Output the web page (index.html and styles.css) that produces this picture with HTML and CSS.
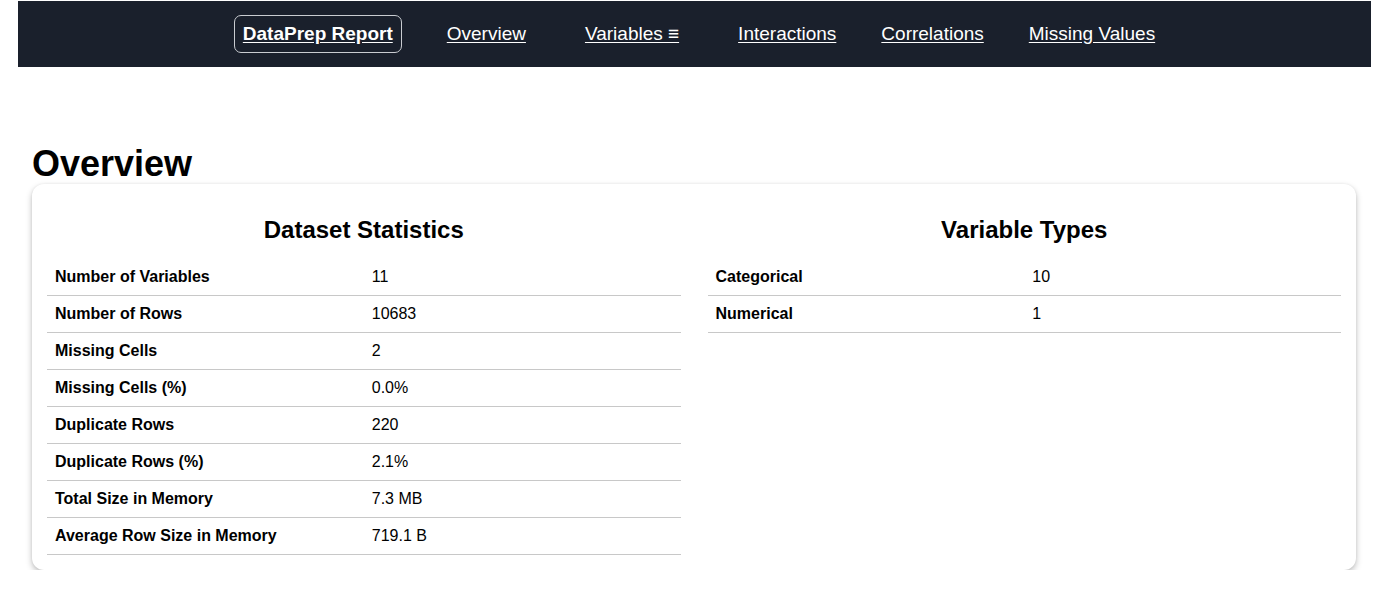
FILE: index.html
```html
<!DOCTYPE html>
<html>
<head>
<meta charset="utf-8">
<title>DataPrep Report</title>
<link rel="stylesheet" href="styles.css">
</head>
<body>
<nav class="topnav">
  <a class="brand" href="#">DataPrep Report</a>
  <a class="nav-link" href="#">Overview</a>
  <a class="nav-link nav-drop" href="#">Variables ≡</a>
  <a class="nav-link" href="#">Interactions</a>
  <a class="nav-link" href="#">Correlations</a>
  <a class="nav-link" href="#">Missing Values</a>
</nav>
<main class="content">
  <h2 class="section-title">Overview</h2>
  <section class="card">
    <div class="col">
      <h3 class="col-title">Dataset Statistics</h3>
      <table class="stats">
        <tr><th>Number of Variables</th><td>11</td></tr>
        <tr><th>Number of Rows</th><td>10683</td></tr>
        <tr><th>Missing Cells</th><td>2</td></tr>
        <tr><th>Missing Cells (%)</th><td>0.0%</td></tr>
        <tr><th>Duplicate Rows</th><td>220</td></tr>
        <tr><th>Duplicate Rows (%)</th><td>2.1%</td></tr>
        <tr><th>Total Size in Memory</th><td>7.3 MB</td></tr>
        <tr><th>Average Row Size in Memory</th><td>719.1 B</td></tr>
      </table>
    </div>
    <div class="col">
      <h3 class="col-title">Variable Types</h3>
      <table class="stats">
        <tr><th>Categorical</th><td>10</td></tr>
        <tr><th>Numerical</th><td>1</td></tr>
      </table>
    </div>
  </section>
</main>
</body>
</html>
```
FILE: styles.css
```css
html, body {
  margin: 0;
  padding: 0;
  background: #ffffff;
  font-family: "Liberation Sans", Arial, sans-serif;
  color: #000;
}

.topnav {
  margin: 1px 9px 0 18px;
  height: 66px;
  background: #1a202c;
  display: flex;
  align-items: center;
  justify-content: center;
  gap: 45px;
}

.topnav a {
  color: #ffffff;
  font-size: 19px;
  text-decoration: underline;
  text-underline-offset: 2px;
  line-height: 22px;
}

.brand {
  font-weight: bold;
  padding: 7px 8px;
  border: 1px solid #c9ccd1;
  border-radius: 7px;
  margin-top: -1px;
}

.nav-drop {
  padding: 0 14px;
}

.content {
  padding: 0 24px 0 32px;
}

.section-title {
  font-size: 36px;
  font-weight: bold;
  margin: 77px 0 0 0;
  line-height: 40px;
}

.card {
  background: #fff;
  border-radius: 12px;
  box-shadow: 0 3px 6px rgba(0, 0, 0, 0.25), 0 0 3px rgba(0, 0, 0, 0.06);
  padding: 15px 15px 15px 15px;
  display: flex;
  gap: 27px;
  align-items: flex-start;
}

.col {
  flex: 1;
}

.col-title {
  font-size: 24px;
  font-weight: bold;
  text-align: center;
  margin: 17px 0 15px;
  line-height: 28px;
}

.stats {
  width: 100%;
  border-collapse: collapse;
  table-layout: fixed;
  font-size: 16px;
}

.stats tr {
  border-bottom: 1px solid #c8c8c8;
}

.stats th,
.stats td {
  text-align: left;
  padding: 8px 8px;
  line-height: 20px;
}

.stats th {
  font-weight: bold;
}

.stats td {
  font-weight: normal;
}
```
